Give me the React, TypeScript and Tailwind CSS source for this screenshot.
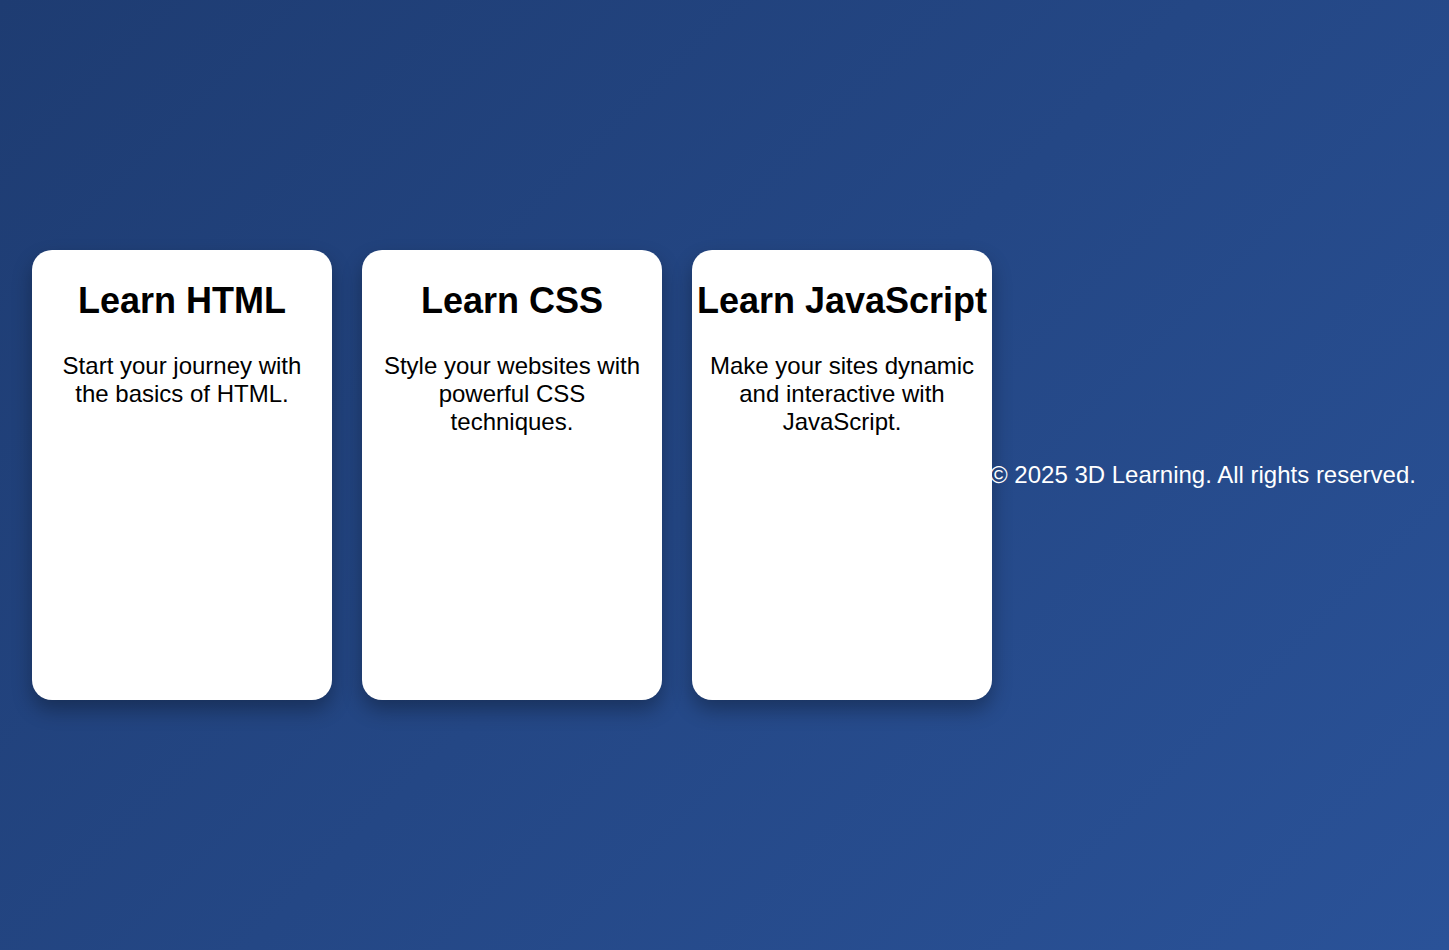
import React from 'react'

const courses = [
    { title: 'Learn HTML', text: 'Start your journey with the basics of HTML.' },
    { title: 'Learn CSS', text: 'Style your websites with powerful CSS techniques.' },
    { title: 'Learn JavaScript', text: 'Make your sites dynamic and interactive with JavaScript.' },
]

export default function App() {
    return (
        <div
            className="min-h-screen w-full flex items-center pl-[32px] bg-[linear-gradient(135deg,#1e3c72,#2a5298)] text-black"
            style={{ fontFamily: '"Liberation Sans", Arial, sans-serif' }}
        >
            {/* Course cards */}
            <div className="flex gap-[30px] shrink-0">
                {courses.map((course) => (
                    <div
                        key={course.title}
                        className="w-[300px] h-[450px] bg-white rounded-[20px] shadow-[0_10px_20px_rgba(0,0,0,0.3)] text-center pt-[24px]"
                    >
                        <h2 className="text-[36px] font-bold leading-normal whitespace-nowrap">{course.title}</h2>
                        <p className="mt-[24px] px-[15px] text-[24px] leading-[28px]">{course.text}</p>
                    </div>
                ))}
            </div>

            <footer className="shrink-0 ml-[-2px] text-white text-[24px] leading-normal whitespace-nowrap">
                © 2025 3D Learning. All rights reserved.
            </footer>
        </div>
    )
}
